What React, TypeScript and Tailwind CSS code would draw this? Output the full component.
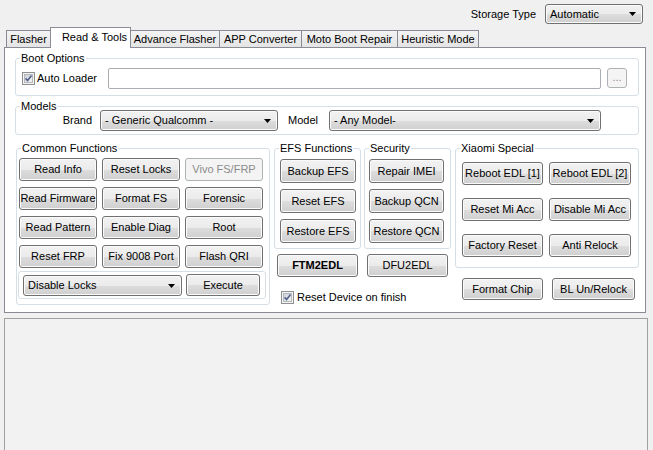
import type { ReactNode } from 'react'

const btnNormal =
  'border-[#707070] bg-[linear-gradient(to_bottom,#f2f2f2_0%,#ebebeb_50%,#dddddd_51%,#cfcfcf_100%)] shadow-[inset_0_0_0_1px_#fbfbfb] text-black'
const btnDisabled = 'border-[#adb2b5] bg-[#f4f4f4] text-[#8b8b8b]'

interface BtnProps {
  label: string
  className?: string
  disabled?: boolean
  bold?: boolean
}

function Btn({ label, className = '', disabled = false, bold = false }: BtnProps) {
  return (
    <div
      className={`flex shrink-0 items-center justify-center whitespace-nowrap rounded-[3px] border ${
        disabled ? btnDisabled : btnNormal
      } ${bold ? 'font-bold' : ''} ${className}`}
    >
      {label}
    </div>
  )
}

function Combo({ value, className = '' }: { value: string; className?: string }) {
  return (
    <div
      className={`flex shrink-0 items-center justify-between rounded-[3px] border pl-[4px] pr-[6px] ${btnNormal} ${className}`}
    >
      <span className="whitespace-nowrap">{value}</span>
      <svg width="7" height="4" viewBox="0 0 7 4">
        <path d="M0 0h7L3.5 4z" fill="#000" />
      </svg>
    </div>
  )
}

function CheckBox() {
  return (
    <span className="flex h-[13px] w-[13px] shrink-0 items-center justify-center border border-[#8e8f8f] bg-[#f4f4f4]">
      <span className="flex h-[9px] w-[9px] items-center justify-center border border-[#b4b8bd] bg-[linear-gradient(135deg,#cdd1d7,#f5f5f5)]">
        <svg width="7" height="7" viewBox="0 0 7 7">
          <path d="M0.6 3.4 L2.6 5.6 L6.5 0.6" stroke="#53638c" strokeWidth="1.6" fill="none" />
        </svg>
      </span>
    </span>
  )
}

function GroupBox({
  title,
  className = '',
  children,
}: {
  title?: string
  className?: string
  children?: ReactNode
}) {
  return (
    <div className={`relative shrink-0 rounded-[3px] border border-[#d5dfe5] ${className}`}>
      {title && (
        <span className="absolute -top-[7px] left-[4px] whitespace-nowrap bg-white px-[1px] leading-[13px]">
          {title}
        </span>
      )}
      {children}
    </div>
  )
}

const tabs = [
  { label: 'Flasher', w: 'w-[45px]' },
  { label: 'Read & Tools', w: 'w-[81px]', active: true },
  { label: 'Advance Flasher', w: 'w-[90px]' },
  { label: 'APP Converter', w: 'w-[83px]' },
  { label: 'Moto Boot Repair', w: 'w-[97px]' },
  { label: 'Heuristic Mode', w: 'w-[82px]' },
]

const commonButtons = [
  { label: 'Read Info' },
  { label: 'Reset Locks' },
  { label: 'Vivo FS/FRP', disabled: true },
  { label: 'Read Firmware' },
  { label: 'Format FS' },
  { label: 'Forensic' },
  { label: 'Read Pattern' },
  { label: 'Enable Diag' },
  { label: 'Root' },
  { label: 'Reset FRP' },
  { label: 'Fix 9008 Port' },
  { label: 'Flash QRI' },
]

const xiaomiButtons = [
  'Reboot EDL [1]',
  'Reboot EDL [2]',
  'Reset Mi Acc',
  'Disable Mi Acc',
  'Factory Reset',
  'Anti Relock',
]

export default function App() {
  return (
    <div className="flex h-[450px] w-[653px] flex-col overflow-hidden bg-[#f0f0f0] font-['Liberation_Sans',Arial,sans-serif] text-[11px] leading-[13px] text-black">
      {/* storage type */}
      <div className="flex h-[27px] shrink-0 items-start justify-end pr-[10px] pt-[4px]">
        <span className="mr-[9px] mt-[4px]">Storage Type</span>
        <Combo value="Automatic" className="h-[20px] w-[98px]" />
      </div>

      {/* tab strip */}
      <div className="flex h-[21px] shrink-0 items-end pl-[6px]">
        {tabs.map((tab, i) =>
          tab.active ? (
            <div
              key={tab.label}
              className={`relative z-10 flex h-[21px] items-start justify-center border border-b-0 border-[#898c95] bg-white pl-[8px] pt-[3px] ${tab.w} ${
                i > 0 ? '-ml-[1px]' : ''
              }`}
            >
              {tab.label}
            </div>
          ) : (
            <div
              key={tab.label}
              className={`mb-[1px] flex h-[17px] items-center justify-center border border-b-0 border-[#898c95] bg-[linear-gradient(to_bottom,#f3f3f3,#e4e4e4)] ${tab.w} ${
                i > 0 ? '-ml-[1px]' : ''
              }`}
            >
              {tab.label}
            </div>
          ),
        )}
      </div>

      {/* tab page */}
      <div className="-mt-[1px] ml-[4px] flex h-[266px] w-[642px] shrink-0 flex-col border border-[#898c95] bg-white">
        <GroupBox title="Boot Options" className="ml-[10px] mt-[10px] h-[38px] w-[624px]">
          <div className="flex items-start pl-[6px] pt-[9px]">
            <div className="flex h-[21px] w-[86px] items-center gap-[2px]">
              <CheckBox />
              <span>Auto Loader</span>
            </div>
            <div className="h-[21px] w-[493px] rounded-[2px] border border-[#abadb3] bg-white" />
            <Btn label="..." disabled className="ml-[6px] h-[20px] w-[20px] pb-[2px]" />
          </div>
        </GroupBox>

        <GroupBox title="Models" className="ml-[10px] mt-[10px] h-[29px] w-[624px]">
          <div className="flex items-center pt-[3px]">
            <span className="w-[76px] text-right">Brand</span>
            <Combo value="- Generic Qualcomm -" className="ml-[8px] h-[21px] w-[178px]" />
            <span className="w-[51px] pl-[10px]">Model</span>
            <Combo value="- Any Model-" className="h-[21px] w-[272px]" />
          </div>
        </GroupBox>

        <div className="ml-[11px] mt-[13px] flex items-start">
          <GroupBox title="Common Functions" className="h-[157px] w-[254px]">
            <div className="grid grid-cols-[78px_78px_78px] gap-x-[5px] gap-y-[6px] pl-[2px] pt-[9px]">
              {commonButtons.map((b) => (
                <Btn key={b.label} label={b.label} disabled={b.disabled} className="h-[23px]" />
              ))}
            </div>
            <GroupBox className="ml-[1px] mt-[3px] h-[28px] w-[248px]">
              <div className="flex items-start pl-[4px] pt-[3px]">
                <Combo value="Disable Locks" className="h-[21px] w-[159px]" />
                <Btn label="Execute" className="-mt-[1px] ml-[4px] h-[22px] w-[74px]" />
              </div>
            </GroupBox>
          </GroupBox>

          <div className="ml-[4px] flex w-[177px] flex-col">
            <div className="flex">
              <GroupBox title="EFS Functions" className="h-[101px] w-[87px]">
                <div className="flex flex-col gap-[6px] pl-[5px] pt-[10px]">
                  <Btn label="Backup EFS" className="h-[24px] w-[76px]" />
                  <Btn label="Reset EFS" className="h-[24px] w-[76px]" />
                  <Btn label="Restore EFS" className="h-[24px] w-[76px]" />
                </div>
              </GroupBox>
              <GroupBox title="Security" className="ml-[3px] h-[101px] w-[87px]">
                <div className="flex flex-col gap-[6px] pl-[4px] pt-[10px]">
                  <Btn label="Repair IMEI" className="h-[24px] w-[75px]" />
                  <Btn label="Backup QCN" className="h-[24px] w-[75px]" />
                  <Btn label="Restore QCN" className="h-[24px] w-[75px]" />
                </div>
              </GroupBox>
            </div>
            <div className="mt-[5px] flex">
              <Btn label="FTM2EDL" bold className="ml-[3px] h-[23px] w-[81px]" />
              <Btn label="DFU2EDL" className="ml-[9px] h-[23px] w-[81px]" />
            </div>
            <div className="ml-[7px] mt-[14px] flex items-center gap-[3px]">
              <CheckBox />
              <span>Reset Device on finish</span>
            </div>
          </div>

          <div className="ml-[4px] flex flex-col">
            <GroupBox title="Xiaomi Special" className="h-[120px] w-[184px]">
              <div className="grid grid-cols-[81px_82px] gap-x-[6px] gap-y-[13px] pl-[6px] pt-[13px]">
                {xiaomiButtons.map((label) => (
                  <Btn key={label} label={label} className="h-[23px]" />
                ))}
              </div>
            </GroupBox>
            <div className="mt-[10px] flex">
              <Btn label="Format Chip" className="ml-[7px] h-[22px] w-[81px]" />
              <Btn label="BL Un/Relock" className="ml-[9px] h-[22px] w-[83px]" />
            </div>
          </div>
        </div>
      </div>

      {/* log panel */}
      <div className="ml-[4px] mt-[5px] h-[140px] w-[644px] shrink-0 border border-[#a0a0a0] bg-[#f2f2f2]" />
    </div>
  )
}
